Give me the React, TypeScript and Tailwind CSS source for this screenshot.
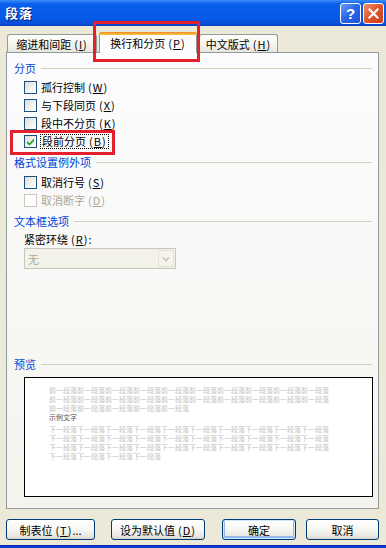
import React from "react";

function M({ k }: { k: string }) {
  return (
    <span className="ml-[3px] tracking-[1px]">
      (<span className="underline underline-offset-1">{k}</span>)
    </span>
  );
}

function Check({ checked, disabled }: { checked?: boolean; disabled?: boolean }) {
  return (
    <span
      className={
        disabled
          ? "w-[13px] h-[13px] border border-[#CAC8BB] bg-white flex items-center justify-center shrink-0"
          : "w-[13px] h-[13px] border border-[#1C5180] bg-[linear-gradient(135deg,#DCDCD7,#F4F4F0_60%,#FFFFFF)] flex items-center justify-center shrink-0"
      }
    >
      {checked && (
        <svg width="9" height="9" viewBox="0 0 9 9">
          <path d="M1 4 L3.5 6.3 L8 1.5 L8 4 L3.5 8.5 L1 6.5 Z" fill="#21A121" />
        </svg>
      )}
    </span>
  );
}

function Header({ text }: { text: string }) {
  return (
    <div className="flex items-center h-[14px] pl-[7px] pr-[6px]">
      <span className="text-[#0046D5] text-[11px] leading-[14px]">{text}</span>
      <span className="flex-1 h-px bg-[#D0D0BF] ml-[5px]" />
    </div>
  );
}

function CheckRow({
  label,
  k,
  checked,
  disabled,
  focus,
}: {
  label: string;
  k: string;
  checked?: boolean;
  disabled?: boolean;
  focus?: boolean;
}) {
  return (
    <div className="flex items-center h-[18px] pl-[17px]">
      <Check checked={checked} disabled={disabled} />
      <span
        className={
          (disabled ? "text-[#ACA899] " : "text-black ") +
          (focus
            ? "ml-[3px] px-px border border-dotted border-black leading-[13px]"
            : "ml-[4px] leading-[14px]") +
          " text-[11px] whitespace-nowrap"
        }
      >
        {label}
        <M k={k} />
      </span>
    </div>
  );
}

const before = "前一段落".repeat(10);
const after = "下一段落".repeat(10);

export default function App() {
  return (
    <div className="w-[386px] h-[548px] bg-[#ECE9D8] flex flex-col relative overflow-hidden font-['Noto_Sans_CJK_SC','Noto_Sans',sans-serif] text-black">
      {/* Title bar */}
      <div className="h-[26px] shrink-0 flex items-center bg-[linear-gradient(to_bottom,#3C8EF8,#0A5FEC_15%,#0558E8_70%,#0A4ED6_92%,#0642C0)] pl-[5px] pr-[2px]">
        <span className="text-white font-bold text-[13px] leading-[16px] [text-shadow:1px_1px_0_#0A1E80] tracking-[1px]">
          段落
        </span>
        <div className="ml-auto flex gap-[2px]">
          <div className="w-[21px] h-[21px] rounded-[3px] border border-white bg-[linear-gradient(135deg,#6A9CF8,#2A64EC_50%,#1E50D8)] flex items-center justify-center">
            <span className="text-white font-bold text-[15px] leading-none font-['Liberation_Sans',sans-serif]">
              ?
            </span>
          </div>
          <div className="w-[21px] h-[21px] rounded-[3px] border border-white bg-[linear-gradient(135deg,#F0906C,#E0542A_50%,#C8401C)] flex items-center justify-center">
            <svg width="11" height="11" viewBox="0 0 11 11">
              <path d="M1.5 1.5 L9.5 9.5 M9.5 1.5 L1.5 9.5" stroke="white" strokeWidth="2.2" strokeLinecap="square" />
            </svg>
          </div>
        </div>
      </div>

      {/* Tabs */}
      <div className="flex items-end h-[20px] mt-[6px] relative z-10">
        <div className="ml-[7px] w-[90px] h-[18px] border border-b-0 border-[#919B9C] rounded-t-[3px] bg-[linear-gradient(to_bottom,#FFFFFF,#F3F3EF_60%,#E6E5DE)] flex items-center justify-center text-[11px] leading-[14px] whitespace-nowrap">
          缩进和间距<M k="I" />
        </div>
        <div className="ml-[2px] w-[98px] h-[21px] -mb-px border-x border-[#919B9C] rounded-t-[3px] bg-[#FCFCFE] flex flex-col">
          <div className="h-[3px] rounded-t-[3px] bg-[linear-gradient(to_bottom,#E68B2C,#FFC73C)] -mx-px" />
          <div className="flex-1 flex items-center justify-center text-[11px] leading-[14px] whitespace-nowrap pb-[2px]">
            换行和分页<M k="P" />
          </div>
        </div>
        <div className="ml-[2px] w-[79px] h-[18px] border border-b-0 border-[#919B9C] rounded-t-[3px] bg-[linear-gradient(to_bottom,#FFFFFF,#F3F3EF_60%,#E6E5DE)] flex items-center justify-center text-[11px] leading-[14px] whitespace-nowrap">
          中文版式<M k="H" />
        </div>
      </div>

      {/* Panel */}
      <div className="ml-[6px] w-[373px] h-[457px] border border-[#919B9C] bg-[linear-gradient(to_bottom,#FCFCFE,#F8F8F6_50%,#F4F3EE)] flex flex-col">
        <div className="h-[8px]" />
        <Header text="分页" />
        <div className="h-[3px]" />
        <CheckRow label="孤行控制" k="W" />
        <CheckRow label="与下段同页" k="X" />
        <CheckRow label="段中不分页" k="K" />
        <CheckRow label="段前分页" k="B" checked focus />
        <div className="h-[5px]" />
        <Header text="格式设置例外项" />
        <div className="h-[4px]" />
        <CheckRow label="取消行号" k="S" />
        <CheckRow label="取消断字" k="D" disabled />
        <div className="h-[5px]" />
        <Header text="文本框选项" />
        <div className="h-[4px]" />
        <div className="h-[14px] pl-[17px] flex items-center text-[11px] leading-[14px]">
          紧密环绕<M k="R" />:
        </div>
        <div className="h-[2px]" />
        <div className="ml-[17px] w-[152px] h-[21px] border border-[#C9C7BA] bg-[#F2F1EA] flex items-center">
          <span className="pl-[3px] text-[11px] leading-[14px] text-[#ACA899]">无</span>
          <div className="ml-auto mr-px w-[16px] h-[17px] bg-[#F4F3EC] border border-[#E4E2D6] rounded-[2px] flex items-center justify-center">
            <svg width="8" height="6" viewBox="0 0 8 6">
              <path d="M1 1.5 L4 4.5 L7 1.5" stroke="#C9C7BA" strokeWidth="1.6" fill="none" />
            </svg>
          </div>
        </div>
        <div className="h-[88px]" />
        <Header text="预览" />
        <div className="h-[6px]" />
        <div className="ml-[17px] w-[349px] h-[120px] border border-black bg-white pl-[24px] pt-[8px] flex flex-col text-[7px] leading-[9px] whitespace-nowrap">
          <span className="text-[#C4C4C4]">{before}</span>
          <span className="text-[#C4C4C4]">{before}</span>
          <span className="text-[#C4C4C4]">{"前一段落".repeat(5)}</span>
          <span className="text-[#505050]">示例文字</span>
          <div className="h-[3px]" />
          <span className="text-[#C4C4C4]">{after}</span>
          <span className="text-[#C4C4C4]">{after}</span>
          <span className="text-[#C4C4C4]">{after}</span>
          <span className="text-[#C4C4C4]">{"下一段落".repeat(4)}</span>
        </div>
      </div>

      {/* Buttons */}
      <div className="flex mt-[10px] h-[21px] text-[11px] leading-[14px]">
        <div className="ml-[6px] w-[89px] h-[21px] border border-[#003C74] rounded-[3px] bg-[linear-gradient(to_bottom,#FFFFFF,#F5F5F1_55%,#E6E5DE_88%,#D6D0C5)] flex items-center justify-center whitespace-nowrap">
          制表位<M k="T" />...
        </div>
        <div className="ml-[16px] w-[94px] h-[21px] border border-[#003C74] rounded-[3px] bg-[linear-gradient(to_bottom,#FFFFFF,#F5F5F1_55%,#E6E5DE_88%,#D6D0C5)] flex items-center justify-center whitespace-nowrap">
          设为默认值<M k="D" />
        </div>
        <div className="ml-[17px] w-[74px] h-[21px] border border-[#003C74] rounded-[3px] bg-[linear-gradient(to_bottom,#FFFFFF,#F5F5F1_55%,#E6E5DE_88%,#D6D0C5)] shadow-[inset_0_0_0_1px_#CEE7FF,inset_0_-1px_0_2px_#98B8EA] flex items-center justify-center whitespace-nowrap">
          确定
        </div>
        <div className="ml-[10px] w-[73px] h-[21px] border border-[#003C74] rounded-[3px] bg-[linear-gradient(to_bottom,#FFFFFF,#F5F5F1_55%,#E6E5DE_88%,#D6D0C5)] flex items-center justify-center whitespace-nowrap">
          取消
        </div>
      </div>

      {/* Bottom frame */}
      <div className="mt-auto h-[3px] bg-[#0A3BD6] border-t border-[#0828A8]" />

      {/* Red highlight boxes */}
      <div className="absolute left-[93px] top-[21px] w-[107px] h-[41px] border-[3px] border-[#E4202C] z-20" />
      <div className="absolute left-[10px] top-[130px] w-[105px] h-[25px] border-[3px] border-[#E4202C] z-20" />
    </div>
  );
}
